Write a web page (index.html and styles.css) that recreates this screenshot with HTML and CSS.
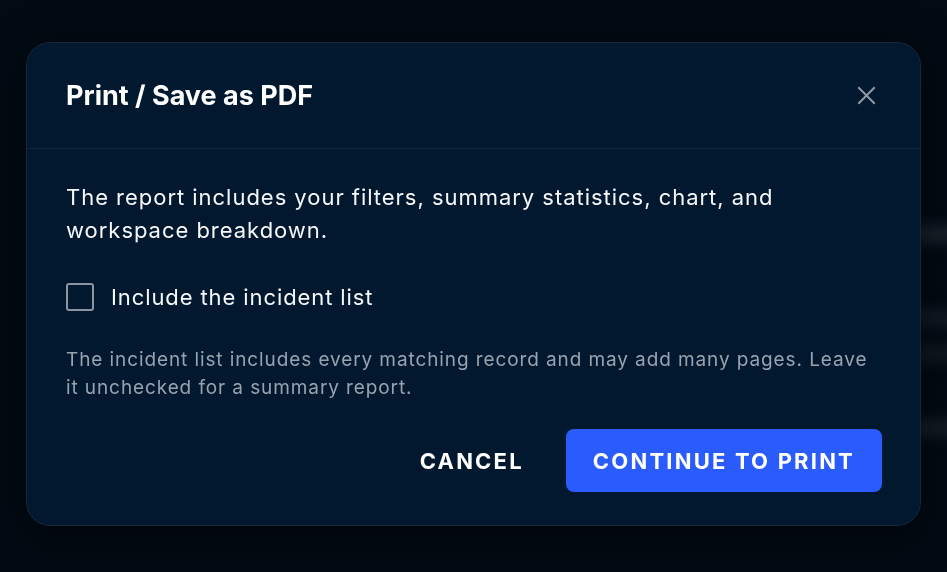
FILE: index.html
```html
<!DOCTYPE html>
<html lang="en">
<head>
<meta charset="utf-8">
<title>Print / Save as PDF</title>
<link rel="stylesheet" href="styles.css">
</head>
<body>
<div class="backdrop">
  <div class="ghost ghost-1"></div>
  <div class="ghost ghost-2"></div>
  <div class="ghost ghost-3"></div>
  <div class="ghost ghost-4"></div>
</div>
<div class="overlay">
  <div class="modal" role="dialog" aria-labelledby="dlg-title">
    <div class="modal-header">
      <h2 id="dlg-title" class="modal-title">Print / Save as PDF</h2>
      <button class="close-btn" aria-label="Close">
        <svg width="19" height="19" viewBox="0 0 19 19"><path d="M2 2L17 17M17 2L2 17" stroke="currentColor" stroke-width="2" stroke-linecap="square"/></svg>
      </button>
    </div>
    <div class="modal-body">
      <p class="lead">The report includes your filters, summary statistics, chart, and workspace breakdown.</p>
      <label class="check-row">
        <span class="checkbox"></span>
        <span class="check-label">Include the incident list</span>
      </label>
      <p class="hint">The incident list includes every matching record and may add many pages. Leave it unchecked for a summary report.</p>
    </div>
    <div class="modal-actions">
      <button class="btn btn-text">CANCEL</button>
      <button class="btn btn-primary">CONTINUE TO PRINT</button>
    </div>
  </div>
</div>
</body>
</html>
```
FILE: styles.css
```css
* { box-sizing: border-box; }
html, body { margin: 0; height: 100%; }
body {
  background: #020a13;
  font-family: Inter, "Noto Sans", "Liberation Sans", sans-serif;
  color: #ffffff;
  overflow: hidden;
  position: relative;
}
.backdrop {
  position: absolute;
  inset: 0;
  filter: blur(7px);
}
.ghost {
  position: absolute;
  right: -30px;
  width: 70px;
  height: 16px;
  background: #1d242d;
  border-radius: 8px;
}
.ghost-1 { top: 226px; }
.ghost-2 { top: 310px; opacity: .7; }
.ghost-3 { top: 346px; opacity: .6; }
.ghost-4 { top: 420px; opacity: .8; }
.overlay {
  position: absolute;
  inset: 0;
  display: flex;
  align-items: center;
  justify-content: center;
  padding-bottom: 4px;
}
.modal {
  width: 895px;
  background: #01182f;
  border: 1px solid #17283a;
  border-radius: 24px;
  box-shadow: 0 10px 40px rgba(0,0,0,.5);
}
.modal-header {
  display: flex;
  align-items: center;
  justify-content: space-between;
  padding: 38px 39px;
  border-bottom: 1px solid #13263a;
}
.modal-title {
  margin: 0;
  font-size: 27px;
  line-height: 29px;
  font-weight: 700;
  letter-spacing: 0;
}
.close-btn {
  background: none;
  border: 0;
  padding: 0;
  margin-right: 5px;
  color: #8f9aa7;
  display: flex;
  cursor: pointer;
}
.modal-body {
  padding: 32px 39px 0;
}
.lead {
  margin: 0;
  font-size: 22px;
  line-height: 33px;
  letter-spacing: 0.97px;
  color: #f6f8fa;
}
.check-row {
  display: flex;
  align-items: center;
  gap: 17px;
  margin-top: 35px;
  height: 30px;
}
.checkbox {
  width: 28px;
  height: 28px;
  border: 2px solid #8b95a1;
  border-radius: 3px;
  flex: none;
}
.check-label {
  font-size: 22px;
  line-height: 30px;
  letter-spacing: 0.9px;
  color: #f6f8fa;
}
.hint {
  margin: 34px 0 0;
  font-size: 19px;
  line-height: 28px;
  letter-spacing: 0.9px;
  color: #98a3af;
}
.modal-actions {
  display: flex;
  justify-content: flex-end;
  align-items: center;
  gap: 15px;
  padding: 27px 38px 33px;
}
.btn {
  font-family: inherit;
  font-size: 22px;
  font-weight: 700;
  letter-spacing: 2.2px;
  border: 0;
  border-radius: 8px;
  height: 63px;
  padding: 0 27px;
  color: #ffffff;
  cursor: pointer;
}
.btn-text { background: transparent; }
.btn-primary { background: #2a5bfc; }
```
